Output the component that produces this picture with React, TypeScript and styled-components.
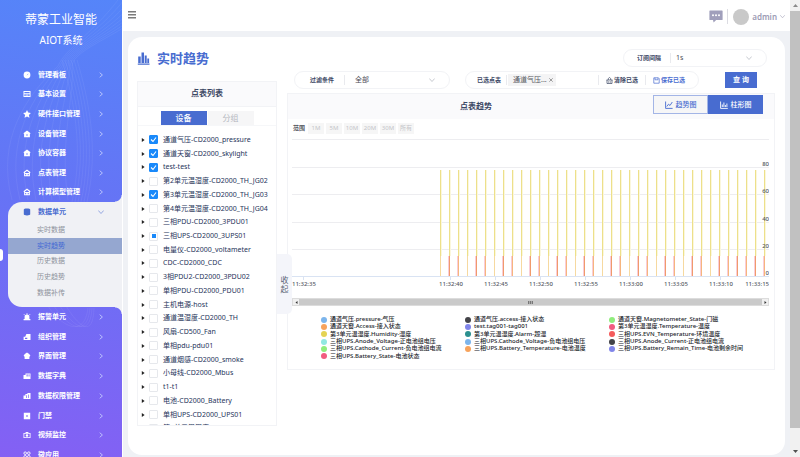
import React, { useState } from "react";
import styled, { createGlobalStyle, css } from "styled-components";

const blue = "#486cd0";
const ink = "#3a4663";
const line = "#f2f3f6";

const GlobalStyle = createGlobalStyle`
  * { box-sizing: border-box; }
  body {
    margin: 0;
    font-family: "Noto Sans", "Noto Sans CJK SC", sans-serif;
    color: ${ink};
    background: #eff1f5;
  }
  button, input, select { font-family: inherit; margin: 0; }
  button { padding: 0; border: 0; cursor: pointer; }
  ul { margin: 0; padding: 0; list-style: none; }
  h1, h2, p { margin: 0; }
  a { color: inherit; text-decoration: none; }
`;

const Page = styled.div`
  display: flex;
  height: 100vh;
  overflow: hidden;
`;

/* ---------- sidebar ---------- */

const Sidebar = styled.aside`
  position: relative;
  flex: 0 0 122px;
  height: 100%;
  overflow: hidden;
  color: #fff;
  background: linear-gradient(188deg, #5585f9 0%, #6673f5 45%, #8460f4 100%);
`;

const Waves = styled.svg`
  position: absolute;
  left: 0;
  top: 0;
  pointer-events: none;
`;

const SideContent = styled.div`
  position: relative;
`;

const Brand = styled.div`
  height: 65px;
  padding-top: 11px;
  text-align: center;
`;

const BrandName = styled.p`
  font-size: 12px;
  line-height: 18px;
`;

const BrandSub = styled.p`
  font-size: 10px;
  line-height: 22px;
`;

const MenuGroup = styled.ul<{ $height: number }>`
  display: flex;
  flex-direction: column;
  height: ${(p) => p.$height}px;
  > li { flex: 1; display: flex; }
`;

const MenuLink = styled.a<{ $active?: boolean }>`
  flex: 1;
  display: flex;
  align-items: center;
  padding: 0 18px 0 23px;
  font-size: 7px;
  line-height: 12px;
  font-weight: 700;
  color: ${(p) => (p.$active ? blue : "#fff")};
  > svg:first-child { margin-right: 7px; }
  > span { flex: 1; }
`;

const OpenGroup = styled.div`
  position: relative;
  height: 105px;
  margin-left: 8px;
  border-radius: 14px 0 0 14px;
  background: #f0f1f5;
  ${MenuLink} { height: 20px; padding-left: 15px; }
`;

const Corner = styled.i<{ $at: "top" | "bottom" }>`
  position: absolute;
  right: 0;
  width: 7px;
  height: 7px;
  ${(p) =>
    p.$at === "top"
      ? css`
          top: -7px;
          background: radial-gradient(circle at 0 0, transparent 6px, #f0f1f5 7px);
        `
      : css`
          bottom: -7px;
          background: radial-gradient(circle at 0 100%, transparent 6px, #f0f1f5 7px);
        `}
`;

const SubMenu = styled.ul`
  display: flex;
  flex-direction: column;
  height: 79px;
  > li { flex: 1; display: flex; }
`;

const SubLink = styled.a<{ $active?: boolean }>`
  flex: 1;
  display: flex;
  align-items: center;
  padding-left: 29px;
  font-size: 7px;
  line-height: 12px;
  color: ${(p) => (p.$active ? "#4267d4" : "#8d929c")};
  background: ${(p) => (p.$active ? "#95a7d0" : "transparent")};
`;

const EdgeHandle = styled.span`
  position: absolute;
  left: 0;
  top: 249px;
  width: 3px;
  height: 12px;
  border-radius: 0 3px 3px 0;
  background: #fff;
`;

/* ---------- main area ---------- */

const Main = styled.main`
  flex: 1;
  min-width: 0;
  display: flex;
  flex-direction: column;
  border-left: 1px solid #fff;
`;

const TopBar = styled.header`
  flex: 0 0 31px;
  display: flex;
  align-items: center;
  justify-content: space-between;
  padding: 2px 5px 0;
  background: #fff;
`;

const IconButton = styled.button`
  display: flex;
  background: none;
`;

const MenuButton = styled(IconButton)`
  padding-bottom: 3px;
`;

const UserArea = styled.div`
  display: flex;
  align-items: center;
`;

const TopDivider = styled.i`
  width: 1px;
  height: 15px;
  margin: 0 5px 0 4px;
  background: #dcdce2;
`;

const Avatar = styled.span`
  width: 16px;
  height: 16px;
  border-radius: 50%;
  background: #c9c9c9;
`;

const UserButton = styled.button`
  display: flex;
  align-items: center;
  gap: 3px;
  margin-left: 3px;
  font-size: 8px;
  line-height: 14px;
  font-weight: 600;
  color: #9c9bb4;
  background: none;
`;

const Card = styled.section`
  flex: 1;
  min-height: 0;
  margin: 6px 5px 2px 5px;
  padding: 12px 10px 0 9px;
  border-radius: 14px;
  background: #fff;
`;

const TitleRow = styled.div`
  display: flex;
  align-items: center;
  justify-content: space-between;
  height: 18px;
  margin-right: 8px;
`;

const Title = styled.h1`
  display: flex;
  align-items: center;
  gap: 7px;
  font-size: 13px;
  line-height: 18px;
  font-weight: 700;
  color: ${blue};
`;

const Pill = styled.div<{ $width: number }>`
  display: flex;
  align-items: center;
  flex: 0 0 ${(p) => p.$width}px;
  height: 18px;
  border: 1px solid ${line};
  border-radius: 9px;
`;

const PillLabel = styled.label<{ $pad: number; $end?: number }>`
  padding: 0 ${(p) => p.$end ?? 10}px 0 ${(p) => p.$pad}px;
  font-size: 6px;
  line-height: 10px;
  font-weight: 700;
  white-space: nowrap;
`;

const Bar = styled.i`
  width: 1px;
  height: 10px;
  background: #e9eaee;
`;

const SelectBox = styled.div`
  position: relative;
  flex: 1;
  display: flex;
  align-items: center;
  > svg { position: absolute; right: 14px; pointer-events: none; }
`;

const Select = styled.select<{ $pad: number }>`
  appearance: none;
  width: 100%;
  padding: 0 0 0 ${(p) => p.$pad}px;
  border: 0;
  outline: 0;
  font-size: 7px;
  line-height: 12px;
  color: #4a4d55;
  background: transparent;
`;

const Body = styled.div`
  display: grid;
  grid-template-columns: 140px minmax(0, 1fr);
  column-gap: 10px;
  margin-top: 4px;
`;

const TreePanel = styled.section`
  position: relative;
  height: 345px;
  margin-top: 10px;
  border: 1px solid ${line};
`;

const PanelTitle = styled.h2`
  font-size: 8px;
  line-height: 22px;
  font-weight: 700;
  text-align: center;
`;

const TreeHeader = styled.div`
  height: 25px;
  border-bottom: 1px solid ${line};
  background: #fafafc;
`;

const Tabs = styled.div`
  display: flex;
  justify-content: center;
  gap: 1px;
  height: 19px;
  padding-top: 4px;
  border-bottom: 1px solid #f6f7f9;
`;

const Tab = styled.button<{ $active?: boolean }>`
  width: 46px;
  font-size: 8px;
  line-height: 14px;
  color: ${(p) => (p.$active ? "#fff" : "#b5b8bf")};
  font-weight: ${(p) => (p.$active ? 500 : 400)};
  background: ${(p) => (p.$active ? blue : "#f6f6f7")};
`;

const TreeScroll = styled.div`
  height: 299px;
  padding-top: 7px;
  overflow: hidden;
`;

const Tree = styled.ul`
  display: flex;
  flex-direction: column;
  height: 302px;
  > li {
    flex: 1;
    display: flex;
    align-items: center;
    padding-left: 3px;
  }
`;

const Expander = styled.button`
  width: 8px;
  display: flex;
  background: none;
`;

const Check = styled.input`
  appearance: none;
  flex: 0 0 9px;
  height: 9px;
  border: 1px solid #e6e8ec;
  border-radius: 1px;
  background: #fff center / 7px 7px no-repeat;
  &:checked {
    border-color: #1989fa;
    background-color: #1989fa;
    background-image: url("data:image/svg+xml,%3Csvg xmlns='http://www.w3.org/2000/svg' viewBox='0 0 7 7'%3E%3Cpath d='M1 3.5l2 2 3-4' fill='none' stroke='white' stroke-width='1.1'/%3E%3C/svg%3E");
  }
  &:indeterminate {
    background-image: linear-gradient(#1989fa, #1989fa);
    background-size: 4px 4px;
  }
`;

const TreeLabel = styled.label`
  padding-left: 5px;
  font-size: 7px;
  line-height: 12px;
  font-weight: 400;
  color: #26345a;
  white-space: nowrap;
`;

const Collapse = styled.button`
  position: absolute;
  left: 139px;
  top: 172px;
  z-index: 1;
  width: 15px;
  height: 60px;
  padding: 0 3px;
  border-radius: 0 5px 5px 0;
  font-size: 8px;
  line-height: 9px;
  color: #5b6375;
  background: #f4f5fa;
`;

const Filters = styled.div`
  display: flex;
  align-items: center;
  margin-left: 7px;
`;

const Tag = styled.span`
  display: flex;
  align-items: center;
  gap: 2px;
  height: 12px;
  margin-left: 1px;
  padding: 0 3px 0 5px;
  font-size: 7px;
  line-height: 12px;
  color: #55585f;
  background: #f4f4f5;
`;

const TextButton = styled.button<{ $primary?: boolean }>`
  display: flex;
  align-items: center;
  gap: 1px;
  padding: 0 7px;
  font-size: 6px;
  line-height: 10px;
  font-weight: 700;
  white-space: nowrap;
  color: ${(p) => (p.$primary ? blue : ink)};
  background: none;
`;

const Spacer = styled.span`
  flex: 1;
`;

const QueryButton = styled.button`
  width: 32px;
  height: 16px;
  margin-left: 26px;
  font-size: 7px;
  line-height: 16px;
  font-weight: 700;
  color: #fff;
  background: ${blue};
`;

const Gap = styled.i<{ $size: number }>`
  flex: 0 0 ${(p) => p.$size}px;
`;

const ChartPanel = styled.section`
  height: 277px;
  margin-top: 4px;
  border: 1px solid ${line};
`;

const ChartHeader = styled.div`
  display: grid;
  grid-template-columns: 1fr 110px;
  height: 25px;
  padding: 1px 11px;
  background: #fafafc;
`;

const Toggle = styled.div`
  display: flex;
  height: 19px;
`;

const ToggleButton = styled.button<{ $active?: boolean }>`
  flex: 1;
  display: flex;
  align-items: center;
  justify-content: center;
  gap: 3px;
  border: 1px solid ${(p) => (p.$active ? blue : "#a3b5e6")};
  font-size: 7px;
  line-height: 12px;
  font-weight: 500;
  color: ${(p) => (p.$active ? "#fff" : blue)};
  background: ${(p) => (p.$active ? blue : "#f6f6f7")};
`;

const RangeRow = styled.div`
  display: flex;
  align-items: center;
  gap: 2px;
  height: 11px;
  margin: 4px 0 0 5px;
`;

const RangeLabel = styled.span`
  width: 13px;
  font-size: 6px;
  line-height: 11px;
  font-weight: 600;
  color: #55585f;
`;

const RangeButton = styled.button`
  width: 16px;
  font-size: 6px;
  line-height: 11px;
  color: #c4c5c9;
  background: #f6f6f6;
`;

const Plot = styled.svg`
  display: block;
  width: 100%;
  margin-top: 2px;
  padding: 0 5px 0 4px;
  text { font-size: 6px; fill: #555a63; font-weight: 500; }
`;

const HScroll = styled.div`
  display: flex;
  align-items: center;
  justify-content: space-between;
  height: 8px;
  margin: 3px 5px 0 4px;
  border: 1px solid #dcdcdc;
  background: #cacaca;
`;

const HScrollEnd = styled.button`
  display: flex;
  align-items: center;
  justify-content: center;
  width: 6px;
  height: 6px;
  background: #f0f0f0;
`;

const Grip = styled.i`
  width: 5px;
  height: 3px;
  background: repeating-linear-gradient(90deg, #777 0 1px, #aaa 1px 2px);
`;

const Legend = styled.ul`
  display: grid;
  grid-template-columns: repeat(3, 144px);
  grid-template-rows: repeat(6, 1fr);
  height: 44px;
  margin: 10px 0 0 33px;
  > li {
    display: flex;
    align-items: center;
    gap: 3px;
    font-size: 6px;
    line-height: 7px;
    font-weight: 500;
    color: #22252b;
    white-space: nowrap;
  }
`;

const Dot = styled.i<{ $color: string }>`
  width: 6px;
  height: 6px;
  border-radius: 50%;
  background: ${(p) => p.$color};
`;

/* ---------- page scroll bar ---------- */

const ScrollTrack = styled.div`
  flex: 0 0 10px;
  display: flex;
  flex-direction: column;
  background: #f1f1f1;
`;

const ScrollEnd = styled.button`
  display: flex;
  align-items: center;
  justify-content: center;
  height: 11px;
  background: none;
`;

const ScrollThumb = styled.i`
  flex: 1;
  margin-bottom: 18px;
  background: #c1c1c1;
`;

/* ---------- icons ---------- */

const Chevron = ({ dir, color, size = 5 }: { dir: "right" | "down"; color: string; size?: number }) => (
  <svg width={size} height={size} viewBox="0 0 6 6" fill="none" stroke={color} strokeWidth="0.8">
    <path d={dir === "right" ? "M1.7 0.7L4.4 3L1.7 5.3" : "M0.3 1.5L3 4.5L5.7 1.5"} />
  </svg>
);

const glyphs: Record<string, React.ReactNode> = {
  gauge: (
    <>
      <circle cx="4" cy="4" r="3.4" />
      <path d="M4 4.2L5.2 2.8" stroke="#6080f5" strokeWidth="0.5" />
    </>
  ),
  form: <path fillRule="evenodd" d="M.5 1h7v6h-7zM1.4 2v1.3h5.2V2zM1.4 4.2v1.9h5.2V4.2zM2.4 4.8h3v.7h-3z" />,
  star: <path d="M4 .1l1.200 2.500 2.700.4-2 1.900.6 2.800L4 6.400 1.500 7.700l.6-2.800-2-1.900 2.700-.4z" />,
  home: <path d="M4 .5L7.600 3.200 6.900 4V7.300H1.100V4L.4 3.200zM3.200 4.600v.8h1.600v-.8z" fillRule="evenodd" />,
  homeLine: (
    <path d="M4 .5L7.600 3.200 6.900 4V7.200H1.100V4L.4 3.200zM2 3.400v.6h4v-.6L4 2zM2.200 5v1.200h1V5zM4.700 5v1.200h1V5z" fillRule="evenodd" />
  ),
  stack: (
    <path d="M4 .6c2 0 3.200.5 3.200 1.200v4.400C7.200 6.900 6 7.400 4 7.400S.8 6.900.8 6.200V1.800C.8 1.100 2 .6 4 .6z" />
  ),
  alarm: (
    <>
      <path d="M1.600 6V3.600C1.600 2.200 2.600 1.500 4 1.500s2.400.7 2.400 2.100V6h1v1.300H.6V6z" />
      <path d="M4 .2v1.500M.9 1.200l1.200 1.200M7.100 1.200L5.900 2.400" stroke="currentColor" strokeWidth="0.8" />
    </>
  ),
  org: <path fillRule="evenodd" d="M3.400.9h4.100v6.200H.6V3.700h1.600zM2 4.700v1.200h2.300V4.700z" />,
  ui: <path d="M4 .6l2.200 1.300 1.200 1.800-1 1v2.400H1.600V4.700l-1-1 1.200-1.800z" />,
  dict: <path fillRule="evenodd" d="M.5 3h2V1.400h5v5.700h-7zM3.600 2.300v2.200h1V2.300zM5.600 2.300v2.200h.9V2.300z" />,
  perm: <path fillRule="evenodd" d="M.5 3.600h1.900V2h2V1h3.100v6.100h-7zM3 3.200V6h.7V3.200zM5.300 2.400V6H6V2.400z" />,
  door: <path fillRule="evenodd" d="M.8.8h6.400v6.400H.8zM3.300 3.300v1.400h1.400V3.300z" />,
  camera: (
    <path fillRule="evenodd" d="M.5 2h1.800l.6-1h2.200l.6 1h1.800v5h-7zM1.300 2.800v3.400h5.400V2.800zM4 3.200a1.300 1.300 0 110 2.600 1.300 1.300 0 010-2.600z" />
  ),
  apps: (
    <g fill="none" stroke="currentColor" strokeWidth="0.9">
      <circle cx="2.200" cy="2.200" r="1.300" />
      <circle cx="5.800" cy="2.200" r="1.300" />
      <circle cx="2.200" cy="5.800" r="1.300" />
      <circle cx="5.800" cy="5.800" r="1.300" />
    </g>
  ),
};

const MenuIcon = ({ name }: { name: string }) => (
  <svg width="8" height="8" viewBox="0 0 8 8" fill="currentColor">
    {glyphs[name]}
  </svg>
);

/* ---------- data ---------- */

const upperMenu: [string, string][] = [
  ["gauge", "管理看板"],
  ["form", "基本设置"],
  ["star", "硬件接口管理"],
  ["home", "设备管理"],
  ["home", "协议容器"],
  ["homeLine", "点表管理"],
  ["homeLine", "计算模型管理"],
];

const lowerMenu: [string, string][] = [
  ["alarm", "报警单元"],
  ["org", "组织管理"],
  ["ui", "界面管理"],
  ["dict", "数据字典"],
  ["perm", "数据权限管理"],
  ["door", "门禁"],
  ["camera", "视频监控"],
  ["apps", "微应用"],
];

const subMenu = ["实时数据", "实时趋势", "历史数据", "历史趋势", "数据补传"];

const devices = [
  "通道气压-CD2000_pressure",
  "通道天窗-CD2000_skylight",
  "test-test",
  "第2单元温湿度-CD2000_TH_JG02",
  "第3单元温湿度-CD2000_TH_JG03",
  "第4单元温湿度-CD2000_TH_JG04",
  "三相PDU-CD2000_3PDU01",
  "三相UPS-CD2000_3UPS01",
  "电量仪-CD2000_voltameter",
  "CDC-CD2000_CDC",
  "3相PDU2-CD2000_3PDU02",
  "单相PDU-CD2000_PDU01",
  "主机电源-host",
  "通道温湿度-CD2000_TH",
  "风扇-CD500_Fan",
  "单相pdu-pdu01",
  "通道烟感-CD2000_smoke",
  "小母线-CD2000_Mbus",
  "t1-t1",
  "电池-CD2000_Battery",
  "单相UPS-CD2000_UPS01",
  "第1单元温湿度-CD2000_TH_JG01",
];

const legend: [string, string][] = [
  ["#7cb5ec", "通道气压.pressure-气压"],
  ["#434348", "通道气压.access-接入状态"],
  ["#90ed7d", "通道天窗.Magnetometer_State-门磁"],
  ["#f7a35c", "通道天窗.Access-接入状态"],
  ["#8085e9", "test.tag001-tag001"],
  ["#f15c80", "第3单元温湿度.Temperature-温度"],
  ["#e4d354", "第3单元温湿度.Humidity-湿度"],
  ["#2b908f", "第3单元温湿度.Alarm-超湿"],
  ["#f45b5b", "三相UPS.EVN_Temperature-环境温度"],
  ["#91e8e1", "三相UPS.Anode_Voltage-正电池组电压"],
  ["#7cb5ec", "三相UPS.Cathode_Voltage-负电池组电压"],
  ["#434348", "三相UPS.Anode_Current-正电池组电流"],
  ["#90ed7d", "三相UPS.Cathode_Current-负电池组电流"],
  ["#f7a35c", "三相UPS.Battery_Temperature-电池温度"],
  ["#8085e9", "三相UPS.Battery_Remain_Time-电池剩余时间"],
  ["#f15c80", "三相UPS.Battery_State-电池状态"],
];

const ticks = ["11:32:40", "11:32:45", "11:32:50", "11:32:55", "11:33:00", "11:33:05", "11:33:10"];
const samples = Array.from({ length: 37 }, (_, i) => ({
  x: 148 + i * 9,
  level: i >= 31 ? (i % 2 ? 2 : 1) : i % 3 === 1 ? 2 : i % 3 === 2 ? 1 : 0,
}));
const levelColor = ["#f6d9a0", "#f6b57e", "#f09a6c"];

const TrendPlot = () => (
  <Plot viewBox="0 0 477 159">
    {[3, 31, 58, 86, 113].map((y) => (
      <rect key={y} x="0" y={y} width="477" height="1" fill="#ededf0" />
    ))}
    {samples.map((s) => (
      <g key={s.x}>
        <rect x={s.x} y="34" width="1" height="86" fill="#ede08a" />
        <rect x={s.x + 1} y="34" width="1" height="86" fill="#fbf7dc" />
        {s.level > 0 && <rect x={s.x - 1} y="120" width="1" height="20" fill="#f9cdd8" />}
        <rect x={s.x} y="120" width="1" height="20" fill={levelColor[s.level]} />
      </g>
    ))}
    <rect x="0" y="140" width="477" height="1" fill="#d9e3f3" />
    <rect x="11" y="140" width="1" height="4" fill="#d9e3f3" />
    {ticks.map((t, i) => (
      <g key={t}>
        <rect x={158 + i * 45} y="140" width="1" height="4" fill="#d9e3f3" />
        <text x={159 + i * 45} y="150" textAnchor="middle">{t}</text>
      </g>
    ))}
    <text x="0" y="150">11:32:35</text>
    <text x="477" y="150" textAnchor="end">11:33:15</text>
    {[80, 60, 40, 20, 0].map((v, i) => (
      <text key={v} x="477" y={[30, 57, 85, 112, 139][i]} textAnchor="end">{v}</text>
    ))}
  </Plot>
);

const MenuItems = ({ items, height }: { items: [string, string][]; height: number }) => (
  <MenuGroup $height={height}>
    {items.map(([icon, text]) => (
      <li key={text}>
        <MenuLink href="#">
          <MenuIcon name={icon} />
          <span>{text}</span>
          <Chevron dir="right" color="#cdd5ff" size={6} />
        </MenuLink>
      </li>
    ))}
  </MenuGroup>
);

export default function App() {
  const [checked, setChecked] = useState<number[]>([0, 1, 2, 4]);
  const toggle = (i: number) =>
    setChecked((c) => (c.includes(i) ? c.filter((n) => n !== i) : [...c, i]));

  return (
    <>
      <GlobalStyle />
      <Page>
        <Sidebar>
          <Waves width="122" height="457" fill="none" stroke="#fff" strokeOpacity="0.08" strokeWidth="0.8">
            {Array.from({ length: 8 }, (_, i) => (
              <path
                key={i}
                d={`M${118 + i * 6} 0C${92 + i * 5} 34 ${66 + i} 48 ${58 + i * 2} 66C${26 + i * 7} 96 ${-4 + i * 9} 140 ${12 + i * 8} 200`}
              />
            ))}
            {Array.from({ length: 6 }, (_, i) => (
              <path key={i} d={`M${62 + i * 3} 60C${74 + i * 3} 100 ${84 + i * 3} 150 ${72 + i * 3} 202`} />
            ))}
            {Array.from({ length: 4 }, (_, i) => (
              <path key={i} d={`M${48 + i * 6} 306C${60 + i * 6} 325 ${84 + i * 3} 340 ${88 + i * 2} 308`} />
            ))}
          </Waves>
          <SideContent>
            <Brand>
              <BrandName>蒂蒙工业智能</BrandName>
              <BrandSub>AIOT系统</BrandSub>
            </Brand>
            <nav>
              <MenuItems items={upperMenu} height={137} />
              <OpenGroup>
                <Corner $at="top" />
                <MenuLink href="#" $active>
                  <MenuIcon name="stack" />
                  <span>数据单元</span>
                  <Chevron dir="down" color="#7d95dc" size={6} />
                </MenuLink>
                <SubMenu>
                  {subMenu.map((t, i) => (
                    <li key={t}>
                      <SubLink href="#" $active={i === 1}>{t}</SubLink>
                    </li>
                  ))}
                </SubMenu>
                <Corner $at="bottom" />
              </OpenGroup>
              <MenuItems items={lowerMenu} height={158} />
            </nav>
          </SideContent>
          <EdgeHandle />
        </Sidebar>

        <Main>
          <TopBar>
            <MenuButton aria-label="菜单">
              <svg width="8" height="8" viewBox="0 0 8 8" fill="#7b7b7b">
                <path d="M0 0h8v1.500H0zM0 3h8v1.500H0zM0 6h8v1.500H0z" />
              </svg>
            </MenuButton>
            <UserArea>
              <IconButton aria-label="消息">
                <svg width="14" height="13" viewBox="0 0 14 13">
                  <path d="M1 .5h12a.6.6 0 01.6.6v8.400a.6.6 0 01-.6.6H7.200L4.600 12.500 4 10.100H1a.6.6 0 01-.6-.6V1.100A.6.6 0 011 .5z" fill="#a09fbb" />
                  <g fill="#fff">
                    <circle cx="4" cy="5.300" r="1" />
                    <circle cx="7" cy="5.300" r="1" />
                    <circle cx="10" cy="5.300" r="1" />
                  </g>
                </svg>
              </IconButton>
              <TopDivider />
              <Avatar />
              <UserButton>
                admin
                <Chevron dir="down" color="#a9a8bd" />
              </UserButton>
            </UserArea>
          </TopBar>

          <Card>
            <TitleRow>
              <Title>
                <svg width="13" height="13" viewBox="0 0 13 13" fill={blue}>
                  <path d="M1.200 4.500h2.500V11H1.200zM4.500.5h2.500V11H4.500zM7.700 3.500h2V11h-2zM10.300 6.500h1.800V11h-1.800zM.8 11.600h11.700v1.200H.8z" />
                </svg>
                实时趋势
              </Title>
              <Pill $width={144}>
                <PillLabel htmlFor="interval" $pad={13} $end={9}>订阅间隔</PillLabel>
                <Bar />
                <SelectBox>
                  <Select id="interval" $pad={5}>
                    <option>1s</option>
                  </Select>
                  <Chevron dir="down" color="#b9bcc4" size={6} />
                </SelectBox>
              </Pill>
            </TitleRow>

            <Body>
              <TreePanel>
                <TreeHeader>
                  <PanelTitle>点表列表</PanelTitle>
                </TreeHeader>
                <Tabs>
                  <Tab $active>设备</Tab>
                  <Tab>分组</Tab>
                </Tabs>
                <TreeScroll>
                  <Tree>
                    {devices.map((d, i) => (
                      <li key={d}>
                        <Expander aria-label="展开">
                          <svg width="4" height="4" viewBox="0 0 4 4">
                            <path d="M.8 0L3.600 2L.8 4z" fill="#222" />
                          </svg>
                        </Expander>
                        <Check
                          id={`device-${i}`}
                          type="checkbox"
                          checked={checked.includes(i)}
                          onChange={() => toggle(i)}
                          ref={(el) => {
                            if (el) el.indeterminate = i === 7 && !checked.includes(7);
                          }}
                        />
                        <TreeLabel htmlFor={`device-${i}`}>{d}</TreeLabel>
                      </li>
                    ))}
                  </Tree>
                </TreeScroll>
                <Collapse>收起</Collapse>
              </TreePanel>

              <div>
                <Filters>
                  <Pill $width={156}>
                    <PillLabel htmlFor="filter" $pad={15}>过滤条件</PillLabel>
                    <Bar />
                    <SelectBox>
                      <Select id="filter" $pad={10}>
                        <option>全部</option>
                      </Select>
                      <Chevron dir="down" color="#b9bcc4" size={6} />
                    </SelectBox>
                  </Pill>
                  <Gap $size={15} />
                  <Pill $width={234}>
                    <PillLabel as="span" $pad={11} $end={5}>已选点表</PillLabel>
                    <Bar />
                    <Tag>
                      通道气压...
                      <svg width="4" height="4" viewBox="0 0 4 4" stroke="#777" strokeWidth="0.7">
                        <path d="M.3.3l3.400 3.400M3.700.3L.3 3.700" />
                      </svg>
                    </Tag>
                    <Spacer />
                    <Bar />
                    <TextButton>
                      <svg width="7" height="7" viewBox="0 0 7 7" fill="none" stroke={ink} strokeWidth="0.7">
                        <path d="M.5 3h6M1 3v3.500h5V3M2.300 3V1.500L3.500.5l1.200 1V3M2.700 4.300v1.400M4.300 4.300v1.400" />
                      </svg>
                      清除已选
                    </TextButton>
                    <Bar />
                    <TextButton $primary>
                      <svg width="7" height="7" viewBox="0 0 7 7" fill="none" stroke={blue} strokeWidth="0.7">
                        <path d="M.8.8h4.600l.8.800v4.600H.8zM2 .8v2h3v-2" />
                      </svg>
                      保存已选
                    </TextButton>
                    <Gap $size={6} />
                  </Pill>
                  <QueryButton>查 询</QueryButton>
                </Filters>

                <ChartPanel>
                  <ChartHeader>
                    <PanelTitle>点表趋势</PanelTitle>
                    <Toggle>
                      <ToggleButton>
                        <svg width="8" height="8" viewBox="0 0 8 8" fill="none" stroke={blue} strokeWidth="0.9">
                          <path d="M.6.5v6.900h7M1.800 5.500l1.700-2.300 1.500 1.300 2.300-3.500" />
                        </svg>
                        趋势图
                      </ToggleButton>
                      <ToggleButton $active>
                        <svg width="8" height="8" viewBox="0 0 8 8" fill="none" stroke="#fff" strokeWidth="0.9">
                          <path d="M.6.5v6.900h7.200M2.300 6V3.500M3.900 6V1.500M5.400 6V4M6.900 6V2.500" />
                        </svg>
                        柱形图
                      </ToggleButton>
                    </Toggle>
                  </ChartHeader>
                  <RangeRow>
                    <RangeLabel>范围</RangeLabel>
                    {["1M", "5M", "10M", "20M", "30M", "所有"].map((r) => (
                      <RangeButton key={r}>{r}</RangeButton>
                    ))}
                  </RangeRow>
                  <TrendPlot />
                  <HScroll>
                    <HScrollEnd aria-label="向左">
                      <svg width="3" height="3" viewBox="0 0 3 3"><path d="M2.500 0v3L.5 1.500z" fill="#333" /></svg>
                    </HScrollEnd>
                    <Grip />
                    <HScrollEnd aria-label="向右">
                      <svg width="3" height="3" viewBox="0 0 3 3"><path d="M.5 0v3l2-1.500z" fill="#333" /></svg>
                    </HScrollEnd>
                  </HScroll>
                  <Legend>
                    {legend.map(([color, text]) => (
                      <li key={text}>
                        <Dot $color={color} />
                        {text}
                      </li>
                    ))}
                  </Legend>
                </ChartPanel>
              </div>
            </Body>
          </Card>
        </Main>

        <ScrollTrack>
          <ScrollEnd aria-label="向上">
            <svg width="5" height="3" viewBox="0 0 5 3"><path d="M0 3h5L2.500 0z" fill="#8a8a8a" /></svg>
          </ScrollEnd>
          <ScrollThumb />
          <ScrollEnd aria-label="向下">
            <svg width="5" height="3" viewBox="0 0 5 3"><path d="M0 0h5L2.500 3z" fill="#505050" /></svg>
          </ScrollEnd>
        </ScrollTrack>
      </Page>
    </>
  );
}
